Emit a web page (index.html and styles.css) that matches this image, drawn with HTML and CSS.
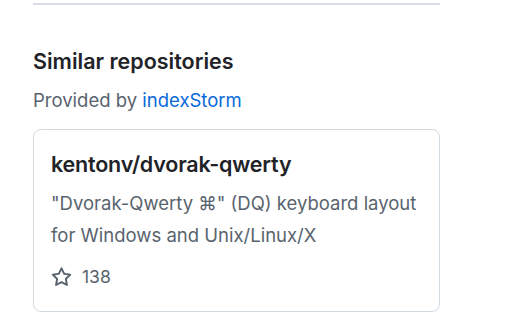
FILE: index.html
```html
<!DOCTYPE html>
<html>
<head>
<meta charset="utf-8">
<link rel="stylesheet" href="styles.css">
</head>
<body>
<div class="wrap">
  <hr class="divider">
  <section class="similar">
    <h2 class="heading">Similar repositories</h2>
    <p class="provided">Provided by <a class="link" href="#">indexStorm</a></p>
    <div class="card">
      <div class="title">kentonv/dvorak-qwerty</div>
      <p class="desc">"Dvorak-Qwerty ⌘" (DQ) keyboard layout for Windows and Unix/Linux/X</p>
      <div class="stars">
        <svg class="star" viewBox="0 0 16 16" width="21" height="21"><path fill="currentColor" d="M8 .25a.75.75 0 0 1 .673.418l1.882 3.815 4.21.612a.75.75 0 0 1 .416 1.279l-3.046 2.970.719 4.192a.751.751 0 0 1-1.088.791L8 12.347l-3.766 1.980a.75.75 0 0 1-1.088-.790l.72-4.194L.818 6.374a.75.75 0 0 1 .416-1.280l4.210-.611L7.327.668A.75.75 0 0 1 8 .25Zm0 2.445L6.615 5.5a.75.75 0 0 1-.564.410l-3.097.450 2.240 2.184a.75.75 0 0 1 .216.664l-.528 3.084 2.769-1.456a.75.75 0 0 1 .698 0l2.770 1.456-.530-3.084a.75.75 0 0 1 .216-.664l2.240-2.183-3.096-.450a.75.75 0 0 1-.564-.410L8 2.694Z"/></svg>
        <span class="count">138</span>
      </div>
    </div>
  </section>
</div>
</body>
</html>
```
FILE: styles.css
```css
html, body {
  margin: 0;
  padding: 0;
  background: #ffffff;
}
body {
  font-family: Inter, "Liberation Sans", Arial, sans-serif;
  color: #1f2328;
}
.wrap {
  width: 407px;
  margin-left: 33px;
  padding-top: 3px;
}
.divider {
  border: 0;
  height: 2px;
  background: #d8dee4;
  margin: 0;
}
.similar {
  padding-top: 41px;
}
.heading {
  margin: 0;
  font-size: 21.5px;
  font-weight: 600;
  letter-spacing: 0;
  line-height: 30px;
  color: #1f2328;
}
.provided {
  margin: 12px 0 0;
  font-size: 18.5px;
  line-height: 24px;
  color: #59636e;
}
.link {
  color: #0969da;
  text-decoration: none;
}
.card {
  margin-top: 17px;
  border: 1px solid #d1d9e0;
  border-radius: 8px;
  padding: 19px 17px 22px;
}
.title {
  font-size: 21.5px;
  font-weight: 600;
  letter-spacing: -0.2px;
  line-height: 30px;
  color: #1f2328;
}
.desc {
  margin: 8px 0 0;
  font-size: 18.5px;
  line-height: 32px;
  color: #59636e;
}
.stars {
  margin-top: 14px;
  display: flex;
  align-items: center;
  gap: 10px;
  color: #59636e;
}
.star {
  display: block;
}
.count {
  font-size: 17.5px;
  line-height: 24px;
}
```
